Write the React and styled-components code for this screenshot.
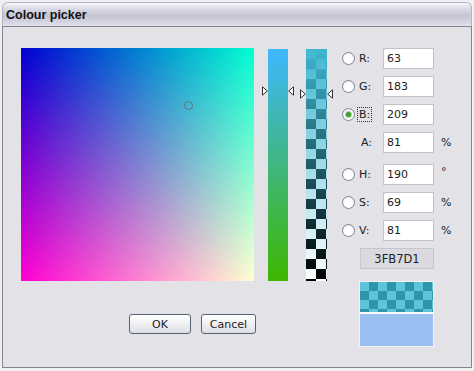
import styled, { createGlobalStyle } from "styled-components";

const GlobalStyle = createGlobalStyle`
  html, body {
    margin: 0;
    padding: 0;
    background: #f0f0f3;
  }
  * {
    box-sizing: border-box;
  }
`;

const Window = styled.div`
  width: 474px;
  height: 371px;
  padding: 2px 2px 3px 2px;
  display: flex;
  flex-direction: column;
  font-family: "DejaVu Sans", Verdana, sans-serif;
  font-size: 11px;
  color: #222;
`;

const TitleBar = styled.div`
  height: 24px;
  flex: none;
  display: flex;
  align-items: center;
  padding-left: 3px;
  border-radius: 6px 6px 0 0;
  border: 1px solid #b4b4c4;
  border-bottom: none;
  background: linear-gradient(#f6f6fa 0%, #d6d6e4 30%, #c4c4d6 55%, #d2d2e0 80%, #e4e4ec 100%);
  font-family: "Liberation Sans", Arial, sans-serif;
  font-weight: bold;
  font-size: 12.5px;
  color: #111;
`;

const Body = styled.div`
  flex: 1;
  display: flex;
  padding: 21px 0 0 18px;
  background: #e2e2e7;
  border: 1px solid #858592;
`;

const LeftColumn = styled.div`
  display: flex;
  flex-direction: column;
`;

const TopRow = styled.div`
  display: flex;
  align-items: flex-start;
`;

const ColourField = styled.div`
  position: relative;
  width: 233px;
  height: 233px;
  flex: none;
  margin-right: 8px;
  background: linear-gradient(to bottom, #000000, #ff0000),
    linear-gradient(to right, rgb(0, 0, 209), rgb(0, 255, 209));
  background-blend-mode: screen;
`;

const FieldMarker = styled.div`
  position: absolute;
  width: 9px;
  height: 9px;
  margin: -4.5px 0 0 -4.5px;
  border: 1px solid #6e6e7a;
  border-radius: 50%;
`;

const SliderColumn = styled.div`
  position: relative;
  padding: 0 6px;
  margin-right: ${(p) => p.$gap}px;
  margin-top: 1px;
`;

const Track = styled.div`
  width: ${(p) => p.$width}px;
  height: 232px;
  background: ${(p) => p.$bg};
  background-size: ${(p) => p.$size || "auto"};
`;

const Arrow = styled.svg`
  position: absolute;
  width: 6px;
  height: 10px;
  margin-top: -5px;
  ${(p) => (p.$side === "left" ? "left: 0;" : "right: 0;")}
`;

const ButtonRow = styled.div`
  display: flex;
  gap: 10px;
  margin-top: 33px;
  padding-left: 108px;
`;

const Button = styled.button`
  width: ${(p) => p.$width}px;
  height: 20px;
  padding: 0;
  border: 1px solid #56647a;
  border-radius: 3px;
  background: linear-gradient(#ffffff, #f2f2f6 45%, #dcdce4);
  font-family: "DejaVu Sans", Verdana, sans-serif;
  font-size: 11px;
  color: #222;
`;

const Controls = styled.div`
  display: flex;
  flex-direction: column;
  gap: 7px;
`;

const FieldRow = styled.div`
  display: grid;
  grid-template-columns: 13px 22px 51px 20px;
  column-gap: 3px;
  align-items: center;
  height: 21px;
  margin-top: ${(p) => p.$extra || 0}px;
`;

const Radio = styled.span`
  width: 13px;
  height: 13px;
  border-radius: 50%;
  border: 1px solid #7c8494;
  background: radial-gradient(circle at 50% 60%, #ffffff 40%, #e4e6ea 100%);
  display: flex;
  align-items: center;
  justify-content: center;
  &::after {
    content: "";
    width: 5px;
    height: 5px;
    border-radius: 50%;
    background: ${(p) => (p.$checked ? "#3c9e32" : "transparent")};
    box-shadow: ${(p) => (p.$checked ? "0 0 0 1px #a6d89e" : "none")};
  }
`;

const Label = styled.span`
  justify-self: start;
  padding: 1px 1px;
  margin-left: ${(p) => (p.$indent ? 1 : -1)}px;
  border: 1px ${(p) => (p.$focus ? "dotted #333" : "solid transparent")};
  line-height: 11px;
`;

const Input = styled.div`
  height: 21px;
  background: #fff;
  border: 1px solid #c2c2ca;
  padding-left: 3px;
  display: flex;
  align-items: center;
`;

const Unit = styled.span`
  margin-left: 4px;
  padding-bottom: ${(p) => (p.$raised ? 6 : 0)}px;
`;

const HexBox = styled.div`
  width: 74px;
  height: 21px;
  margin-left: 18px;
  border: 1px solid #c6c6ce;
  background: #d9d9de;
  display: flex;
  align-items: center;
  justify-content: center;
  font-size: 11.5px;
`;

const Swatch = styled.div`
  width: 75px;
  height: 66px;
  margin-left: 17px;
  margin-top: 5px;
  border: 1px solid #f4f4f6;
  display: flex;
  flex-direction: column;
  gap: 2px;
  background: #fafafa;
`;

const NewColour = styled.div`
  height: 30px;
  background: conic-gradient(#2f95ab 25%, #5dc4d9 0 50%, #2f95ab 0 75%, #5dc4d9 0);
  background-size: 18px 18px;
`;

const OldColour = styled.div`
  flex: 1;
  background: #99c0f0;
`;

const checker =
  "linear-gradient(to bottom, rgba(63,183,209,1), rgba(63,183,209,0)), conic-gradient(#000 25%, #fff 0 50%, #000 0 75%, #fff 0)";

const ArrowRight = ({ top }) => (
  <Arrow $side="left" viewBox="0 0 6 10" style={{ top }}>
    <path d="M0.5 0.8 L5.3 5 L0.5 9.2 Z" fill="#fff" stroke="#333" strokeWidth="1" />
  </Arrow>
);

const ArrowLeft = ({ top }) => (
  <Arrow $side="right" viewBox="0 0 6 10" style={{ top }}>
    <path d="M5.5 0.8 L0.7 5 L5.5 9.2 Z" fill="#fff" stroke="#333" strokeWidth="1" />
  </Arrow>
);

const rows = [
  { radio: true, label: "R:", value: "63" },
  { radio: true, label: "G:", value: "183" },
  { radio: true, label: "B:", value: "209", checked: true },
  { radio: false, label: "A:", value: "81", unit: "%" },
  { radio: true, label: "H:", value: "190", unit: "°", extra: 4 },
  { radio: true, label: "S:", value: "69", unit: "%" },
  { radio: true, label: "V:", value: "81", unit: "%" },
];

export default function App() {
  const g = 183, r = 63, b = 209, a = 0.81;
  return (
    <>
      <GlobalStyle />
      <Window>
        <TitleBar>Colour picker</TitleBar>
        <Body>
          <LeftColumn>
            <TopRow>
              <ColourField>
                <FieldMarker style={{ left: `${(g / 255) * 233}px`, top: `${(r / 255) * 233}px` }} />
              </ColourField>
              <SliderColumn $gap={6}>
                <Track $width={20} $bg="linear-gradient(to bottom, rgb(63,183,255), rgb(63,183,0))" />
                <ArrowRight top={`${(1 - b / 255) * 232}px`} />
                <ArrowLeft top={`${(1 - b / 255) * 232}px`} />
              </SliderColumn>
              <SliderColumn $gap={9}>
                <Track $width={21} $bg={checker} $size="100% 100%, 20px 20px" />
                <ArrowRight top={`${(1 - a) * 232 + 1}px`} />
                <ArrowLeft top={`${(1 - a) * 232 + 1}px`} />
              </SliderColumn>
            </TopRow>
            <ButtonRow>
              <Button $width={62}>OK</Button>
              <Button $width={55}>Cancel</Button>
            </ButtonRow>
          </LeftColumn>
          <Controls>
            {rows.map((row) => (
              <FieldRow key={row.label} $extra={row.extra}>
                {row.radio ? <Radio $checked={row.checked} /> : <span />}
                <Label $indent={!row.radio} $focus={row.checked}>
                  {row.label}
                </Label>
                <Input>{row.value}</Input>
                <Unit $raised={row.unit === "°"}>{row.unit}</Unit>
              </FieldRow>
            ))}
            <HexBox>3FB7D1</HexBox>
            <Swatch>
              <NewColour />
              <OldColour />
            </Swatch>
          </Controls>
        </Body>
      </Window>
    </>
  );
}
